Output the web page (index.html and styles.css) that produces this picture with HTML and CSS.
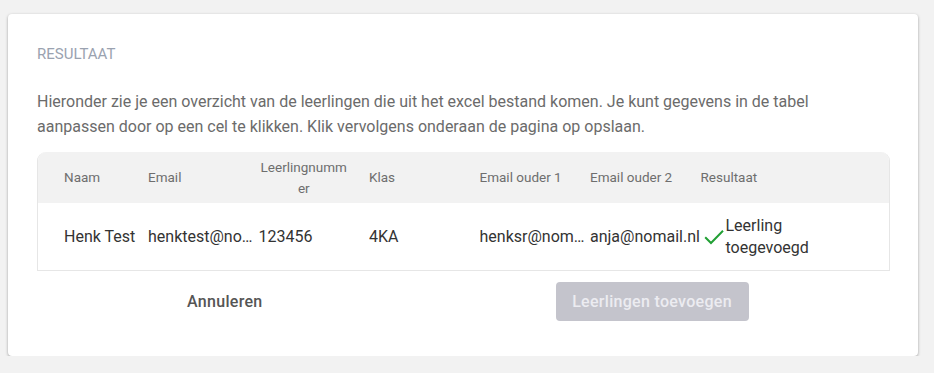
FILE: index.html
```html
<!DOCTYPE html>
<html lang="nl">

<head>
 <meta charset="UTF-8">
 <meta name="viewport" content="width=device-width, initial-scale=1.0">
 <title>Leerlingen importeren - resultaat</title>
 <link rel="stylesheet" href="styles.css">
</head>

<body>

 <section class="card">
  <h2 class="card-title">Resultaat</h2>
  <p class="intro">Hieronder zie je een overzicht van de leerlingen die uit het excel bestand komen. Je kunt gegevens in de tabel aanpassen door op een cel te klikken. Klik vervolgens onderaan de pagina op opslaan.</p>

  <div class="result-table">
   <div class="row head">
    <div class="cell first">Naam</div>
    <div class="cell">Email</div>
    <div class="cell wrap">Leerlingnumm<wbr>er</div>
    <div class="cell">Klas</div>
    <div class="cell">Email ouder 1</div>
    <div class="cell">Email ouder 2</div>
    <div class="cell">Resultaat</div>
   </div>
   <div class="row body">
    <div class="cell first">Henk Test</div>
    <div class="cell">henktest@nomail.nl</div>
    <div class="cell">123456</div>
    <div class="cell">4KA</div>
    <div class="cell">henksr@nomail.nl</div>
    <div class="cell fits">anja@nomail.nl</div>
    <div class="cell status">
     <svg class="check" viewBox="0 0 20 16" width="20" height="16"><polyline points="1.2,8.2 7,14 19,1.8" fill="none" stroke="#22a035" stroke-width="2"/></svg>
     <span>Leerling<br>toegevoegd</span>
    </div>
   </div>
  </div>

  <div class="actions">
   <button class="btn-text" type="button">Annuleren</button>
   <button class="btn-primary" type="button" disabled>Leerlingen toevoegen</button>
  </div>
 </section>

</body>

</html>
```

FILE: styles.css
```css
*,
*::before,
*::after {
 box-sizing: border-box;
}

body {
 margin: 0;
 font-family: Roboto, 'Liberation Sans', sans-serif;
 background: #f2f2f2;
 padding: 14px 16px 0 8px;
}

.card {
 background: #fff;
 border-radius: 4px;
 box-shadow: 0 1px 3px rgba(0, 0, 0, .35);
 padding: 30px 28px 35px 29px;
 height: 342px;
}

.card-title {
 margin: 0;
 font-size: 15px;
 font-weight: 400;
 line-height: 20px;
 text-transform: uppercase;
 color: #9aa2b0;
}

.intro {
 margin: 25px 0 13px;
 font-size: 16px;
 line-height: 25px;
 color: #6b6b6b;
}

.result-table {
 border: 1px solid #e6e6e6;
 border-top: 0;
 border-radius: 9px 9px 0 0;
 overflow: hidden;
}

.row {
 display: grid;
 grid-template-columns: 110px repeat(5, 110.5px) 1fr;
 align-items: center;
}

.head {
 background: #f2f2f2;
 height: 51px;
 font-size: 13.5px;
 line-height: 21px;
 color: #6e6e6e;
}

.body {
 height: 67px;
 font-size: 16px;
 line-height: 22px;
 color: #333;
}

.cell {
 padding: 0 5px 0 0;
 white-space: nowrap;
 overflow: hidden;
 text-overflow: ellipsis;
}

.cell.fits {
 padding-right: 0;
 overflow: visible;
}

.cell.first {
 padding-left: 26px;
}

.cell.wrap {
 white-space: normal;
 text-align: center;
 padding-right: 20px;
}

.cell.status {
 display: flex;
 align-items: center;
 gap: 2px;
 white-space: normal;
 padding-left: 3px;
}

.check {
 flex: none;
}

.actions {
 display: flex;
 align-items: center;
 margin-top: 11px;
 padding-left: 134px;
}

.btn-text {
 font-family: inherit;
 font-size: 16px;
 font-weight: 500;
 letter-spacing: .3px;
 color: #555;
 background: none;
 border: 0;
 padding: 0 16px;
 height: 39px;
}

.btn-primary {
 font-family: inherit;
 font-size: 16px;
 font-weight: 500;
 letter-spacing: .3px;
 color: #ececf1;
 background: #c4c4cc;
 border: 0;
 border-radius: 4px;
 height: 39px;
 width: 193px;
 margin-left: 277px;
}
```
